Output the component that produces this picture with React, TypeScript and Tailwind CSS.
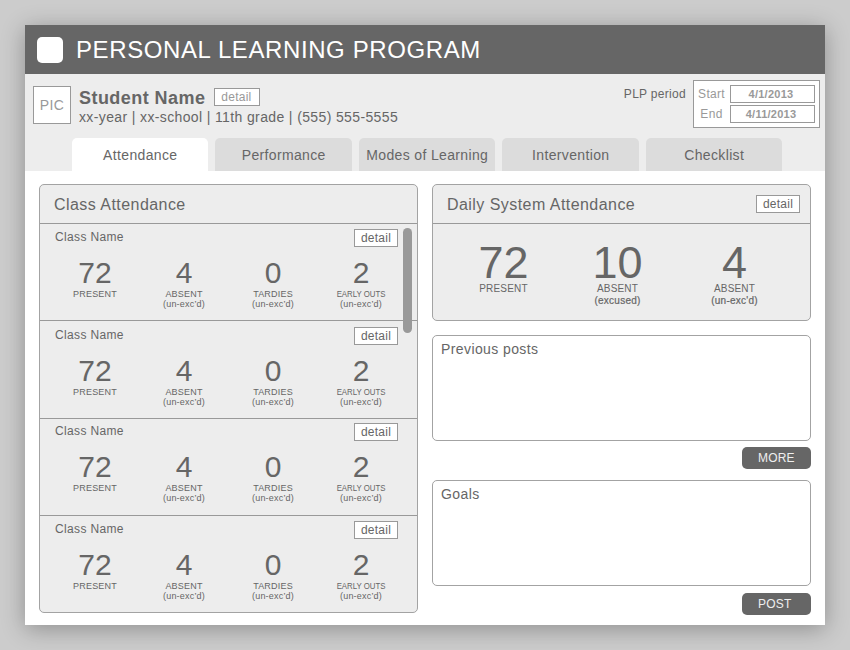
import React from "react";

type Stat = { value: string; label: string; note?: string; tight?: boolean };

const classStats: Stat[] = [
  { value: "72", label: "PRESENT" },
  { value: "4", label: "ABSENT", note: "(un-exc’d)" },
  { value: "0", label: "TARDIES", note: "(un-exc’d)" },
  { value: "2", label: "EARLY OUTS", note: "(un-exc’d)", tight: true },
];

const dailyStats: Stat[] = [
  { value: "72", label: "PRESENT" },
  { value: "10", label: "ABSENT", note: "(excused)" },
  { value: "4", label: "ABSENT", note: "(un-exc'd)" },
];

const tabs = ["Attendance", "Performance", "Modes of Learning", "Intervention", "Checklist"];

const rowStyles = ["h-[96px] pt-[5px]", "h-[98px] border-t pt-[6px]", "h-[97px] border-t pt-[4px]", "h-[97px] border-t pt-[5px]"];

function DetailButton() {
  return (
    <button className="h-[18px] w-[44px] shrink-0 border border-[#999] bg-white text-center text-[12px] leading-[16px] tracking-[0.25px]">
      detail
    </button>
  );
}

function ClassRow({ className }: { className: string }) {
  return (
    <div className={`border-[#999] ${className}`}>
      <div className="flex h-[18px] justify-between pr-[19px] pl-[15px]">
        <span className="text-[12px] leading-[16px] tracking-[0.35px]">Class Name</span>
        <DetailButton />
      </div>
      <div className="mt-[15px] ml-[10.5px] flex text-center whitespace-nowrap">
        {classStats.map((s) => (
          <div key={s.label} className={s.tight ? "w-[87px]" : "w-[89px]"}>
            <div className="text-[30px] leading-[22px]">{s.value}</div>
            <div className="mt-[5px] text-[9px] leading-[10px]">
              <span className={s.tight ? "inline-block scale-x-[0.87]" : "tracking-[0.2px]"}>{s.label}</span>
            </div>
            {s.note && <div className="text-[9px] leading-[10px] tracking-[0.2px]">{s.note}</div>}
          </div>
        ))}
      </div>
    </div>
  );
}

function NoteBox({ title, action, offset }: { title: string; action: string; offset: string }) {
  return (
    <section className="flex flex-col items-end">
      <div className="h-[106px] w-full rounded-[5px] border border-[#a3a3a3] bg-white px-[8px] pt-[5px] text-[14px] leading-[16px] tracking-[0.4px]">
        {title}
      </div>
      <button
        className={`h-[22px] w-[69.5px] rounded-[5px] bg-[#666] pl-[16.5px] text-left text-[12px] leading-[22px] tracking-[0.2px] text-[#eee] ${offset}`}
      >
        {action}
      </button>
    </section>
  );
}

function DateField({ label, value }: { label: string; value: string }) {
  return (
    <div className="flex h-[18px] items-center">
      <span className="w-[35px] pr-[2px] text-center text-[12px] leading-[16px] tracking-[0.3px]">{label}</span>
      <span className="h-[18px] w-[85px] border border-[#999] pr-[3px] text-center text-[11px] leading-[16px] font-bold tracking-[0.25px]">
        {value}
      </span>
    </div>
  );
}

export default function App() {
  return (
    <div className="h-[650px] w-[850px] overflow-hidden bg-[#ccc] p-[25px] font-['Liberation_Sans',Arial,sans-serif] text-[#666]">
      <div className="h-[600px] w-[800px] bg-white shadow-[0_4px_22px_rgba(0,0,0,0.3)]">
        <header className="flex h-[49px] items-center bg-[#666] pl-[12px]">
          <div className="h-[26px] w-[26px] rounded-[5px] bg-white" />
          <h1 className="ml-[13px] pt-px text-[24px] leading-[28px] tracking-[0.6px] text-white">
            PERSONAL LEARNING PROGRAM
          </h1>
        </header>

        <div className="flex h-[97px] flex-col justify-between bg-[#ededed]">
          <div className="flex items-start pt-[6px] pr-[5px] pl-[8px]">
            <div className="mt-[6px] h-[38px] w-[38px] border border-[#999] bg-white text-center text-[14px] leading-[36px] tracking-[0.4px] text-[#999]">
              PIC
            </div>
            <div className="mt-[8px] ml-[8px]">
              <div className="flex h-[20px] items-center">
                <span className="text-[18px] leading-[20px] font-bold tracking-[0.45px]">Student Name</span>
                <button className="mb-[2px] ml-[8.5px] h-[18px] w-[46px] border border-[#999] bg-white pr-[1px] text-[12px] leading-[16px] tracking-[0.25px] text-[#999]">
                  detail
                </button>
              </div>
              <div className="mt-[1px] text-[14px] leading-[16px] tracking-[0.37px] whitespace-nowrap">
                xx-year | xx-school | 11th grade | (555) 555-5555
              </div>
            </div>
            <span className="mt-[6px] mr-[7px] ml-auto text-[12px] leading-[16px] tracking-[0.3px]">PLP period</span>
            <div className="flex h-[48px] w-[127px] flex-col gap-[2px] border border-[#999] bg-white pt-[4px] pl-[1px] text-[#999]">
              <DateField label="Start" value="4/1/2013" />
              <DateField label="End" value="4/11/2013" />
            </div>
          </div>
          <nav className="flex gap-[7px] pl-[46.5px]">
            {tabs.map((tab, i) => (
              <div
                key={tab}
                className={`h-[33.5px] w-[136.5px] rounded-t-[5px] pl-[1px] text-center text-[14px] leading-[35px] tracking-[0.35px] whitespace-nowrap ${
                  i === 0 ? "bg-white" : "bg-[#dcdcdc]"
                }`}
              >
                {tab}
              </div>
            ))}
          </nav>
        </div>

        <main className="flex gap-[14px] pt-[12.5px] pl-[14px]">
          <section className="relative h-[429px] w-[379px] rounded-[5px] border border-[#a3a3a3] bg-[#ededed]">
            <h2 className="h-[39px] border-b border-[#999] pl-[14px] text-[16px] leading-[40px] tracking-[0.45px]">
              Class Attendance
            </h2>
            {rowStyles.map((style) => (
              <ClassRow key={style} className={style} />
            ))}
            <div className="absolute top-[43px] right-[5px] h-[105px] w-[9px] rounded-full bg-[#999]" />
          </section>

          <div className="w-[379px]">
            <section className="h-[137px] rounded-[5px] border border-[#a3a3a3] bg-[#ededed]">
              <div className="flex h-[39px] items-center justify-between border-b border-[#999] pr-[10px] pl-[14px]">
                <h2 className="pt-[2px] text-[16px] leading-[18px] tracking-[0.45px]">Daily System Attendance</h2>
                <DetailButton />
              </div>
              <div className="flex pt-[21px] pl-[13.5px] text-center">
                {dailyStats.map((s, i) => (
                  <div key={i} className={i === 2 ? "w-[120px]" : "w-[114px]"}>
                    <div className="text-[45px] leading-[36px]">{s.value}</div>
                    <div className="mt-[2px] text-[10px] leading-[12px] tracking-[0.2px]">{s.label}</div>
                    {s.note && (
                      <div className="text-[10px] leading-[12px] tracking-[0.25px] [-webkit-text-stroke:0.2px_#666]">
                        {s.note}
                      </div>
                    )}
                  </div>
                ))}
              </div>
            </section>
            <div className="mt-[14px] flex flex-col gap-[11px]">
              <NoteBox title="Previous posts" action="MORE" offset="mt-[6px]" />
              <NoteBox title="Goals" action="POST" offset="mt-[7px]" />
            </div>
          </div>
        </main>
      </div>
    </div>
  );
}
